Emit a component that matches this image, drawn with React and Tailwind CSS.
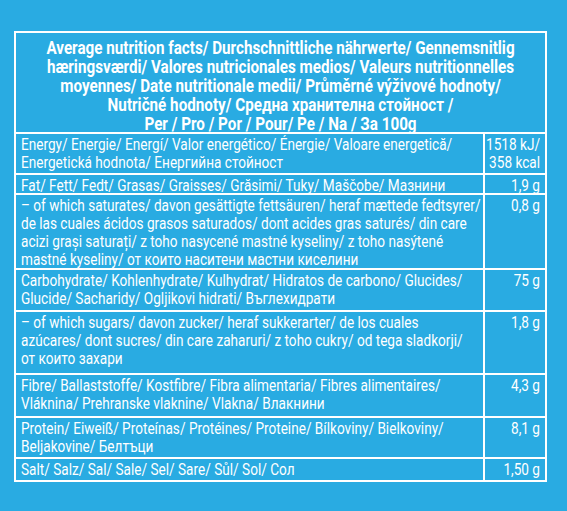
const header = [
  "Average nutrition facts/ Durchschnittliche nährwerte/ Gennemsnitlig",
  "hæringsværdi/ Valores nutricionales medios/ Valeurs nutritionnelles",
  "moyennes/ Date nutritionale medii/ Průměrné výživové hodnoty/",
  "Nutričné hodnoty/ Средна хранителна стойност /",
  "Per / Pro / Por / Pour/ Pe / Na / За 100g",
];

const rows = [
  {
    lines: ["Energy/ Energie/ Energí/ Valor energético/ Énergie/ Valoare energetică/", "Energetická hodnota/ Енергийна стойност"],
    value: ["1518 kJ/", "358 kcal"],
    h: "h-[41px]",
  },
  { lines: ["Fat/ Fett/ Fedt/ Grasas/ Graisses/ Grăsimi/ Tuky/ Maščobe/ Мазнини"], value: ["1,9 g"], h: "h-[20px]" },
  {
    lines: [
      "– of which saturates/ davon gesättigte fettsäuren/ heraf mættede fedtsyrer/",
      "de las cuales ácidos grasos saturados/ dont acides gras saturés/ din care",
      "acizi grași saturați/ z toho nasycené mastné kyseliny/ z toho nasýtené",
      "mastné kyseliny/ от които наситени мастни киселини",
    ],
    value: ["0,8 g"],
    h: "h-[75px]",
  },
  {
    lines: ["Carbohydrate/ Kohlenhydrate/ Kulhydrat/ Hidratos de carbono/ Glucides/", "Glucide/ Sacharidy/ Ogljikovi hidrati/ Въглехидрати"],
    value: ["75 g"],
    h: "h-[42px]",
  },
  {
    lines: [
      "– of which sugars/ davon zucker/ heraf sukkerarter/ de los cuales",
      "azúcares/ dont sucres/ din care zaharuri/ z toho cukry/ od tega sladkorji/",
      "от които захари",
    ],
    value: ["1,8 g"],
    h: "h-[63px]",
  },
  {
    lines: ["Fibre/ Ballaststoffe/ Kostfibre/ Fibra alimentaria/ Fibres alimentaires/", "Vláknina/ Prehranske vlaknine/ Vlakna/ Влакнини"],
    value: ["4,3 g"],
    h: "h-[43px]",
  },
  {
    lines: ["Protein/ Eiweiß/ Proteínas/ Protéines/ Proteine/ Bílkoviny/ Bielkoviny/", "Beljakovine/ Белтъци"],
    value: ["8,1 g"],
    h: "h-[41px]",
  },
  { lines: ["Salt/ Salz/ Sal/ Sale/ Sel/ Sare/ Sůl/ Sol/ Сол"], value: ["1,50 g"], h: "h-[23px]" },
];

export default function App() {
  return (
    <div
      className="w-[567px] h-[511px] bg-[#29abe2] text-white pt-[31px] pl-[14px]"
      style={{ fontFamily: 'Roboto, "Liberation Sans", sans-serif' }}
    >
      <div className="w-[533px] border-2 border-white">
        <div className="h-[99px] pt-[6px] flex flex-col items-center font-bold text-[17.5px] leading-[19px] whitespace-nowrap scale-x-[0.87] origin-center">
          {header.map((l) => (
            <div key={l}>{l}</div>
          ))}
        </div>
        {rows.map((r) => (
          <div key={r.value[0]} className={`flex border-t-2 border-white text-[17px] leading-[18px] ${r.h}`}>
            <div className="flex-1 min-w-0 pl-[5px] pt-[1px]">
              <div className="whitespace-nowrap scale-x-[0.8] origin-left">
                {r.lines.map((l) => (
                  <div key={l}>{l}</div>
                ))}
              </div>
            </div>
            <div className="w-[62px] shrink-0 border-l-2 border-white pt-[1px] pr-[5px]">
              <div className="flex flex-col items-end whitespace-nowrap scale-x-[0.8] origin-right">
                {r.value.map((v) => (
                  <div key={v}>{v}</div>
                ))}
              </div>
            </div>
          </div>
        ))}
      </div>
    </div>
  );
}
